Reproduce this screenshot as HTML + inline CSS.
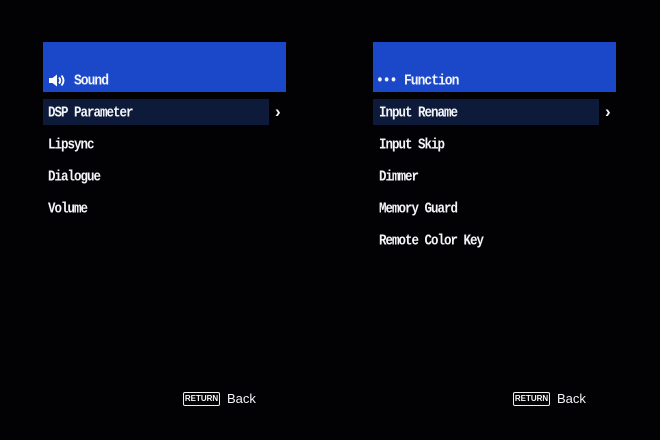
<!DOCTYPE html>
<html><head><meta charset="utf-8"><style>
*{margin:0;padding:0;box-sizing:border-box}
html,body{width:660px;height:440px;background:#020204;overflow:hidden}
body{position:relative;font-family:"Liberation Mono",monospace;font-weight:bold;font-size:12.5px;letter-spacing:-1px;color:#f2f4f8}
.hdr{position:absolute;top:42px;width:243px;height:50px;background:#1a48c8}
.hdr span{position:absolute;top:31px;font-size:13px;transform:scaleY(1.15);transform-origin:left center}
.sel{position:absolute;top:99px;width:226px;height:26px;background:#0e1a3a}
.item{position:absolute;line-height:14px;transform:scaleY(1.15);transform-origin:left center}
.arr{position:absolute;top:102px;font-family:"Liberation Sans",sans-serif;font-size:17px;font-weight:bold}
.ret{position:absolute;top:392px;width:37px;height:14px;border:1.5px solid #eee;border-radius:2px;font-family:"Liberation Sans",sans-serif;font-size:8px;line-height:11px;text-align:center;font-weight:bold;letter-spacing:0}
.back{position:absolute;top:391px;font-family:"Liberation Sans",sans-serif;font-weight:normal;font-size:13px;letter-spacing:0}
</style></head><body>
<div class="hdr" style="left:43px">
<svg style="position:absolute;left:5px;top:32px" width="17" height="13" viewBox="0 0 17 13"><path d="M1 4h3.5l4.5-3.5v12L4.5 9H1z" fill="#fff"/><path d="M11 3.5q2.5 3 0 6M13.5 1.5q4 5 0 10" stroke="#fff" stroke-width="1.8" fill="none"/></svg>
<span style="left:31px">Sound</span></div>
<div class="sel" style="left:43px"></div>
<div class="arr" style="left:275px">›</div>
<div class="item" style="left:48px;top:106px">DSP Parameter</div>
<div class="item" style="left:48px;top:138px">Lipsync</div>
<div class="item" style="left:48px;top:170px">Dialogue</div>
<div class="item" style="left:48px;top:202px">Volume</div>
<div class="ret" style="left:183px">RETURN</div>
<div class="back" style="left:227px">Back</div>

<div class="hdr" style="left:373px"><span style="left:3px;letter-spacing:-1px">•••</span><span style="left:31px">Function</span></div>
<div class="sel" style="left:373px"></div>
<div class="arr" style="left:605px">›</div>
<div class="item" style="left:379px;top:106px">Input Rename</div>
<div class="item" style="left:379px;top:138px">Input Skip</div>
<div class="item" style="left:379px;top:170px">Dimmer</div>
<div class="item" style="left:379px;top:202px">Memory Guard</div>
<div class="item" style="left:379px;top:234px">Remote Color Key</div>
<div class="ret" style="left:513px">RETURN</div>
<div class="back" style="left:557px">Back</div>
</body></html>
